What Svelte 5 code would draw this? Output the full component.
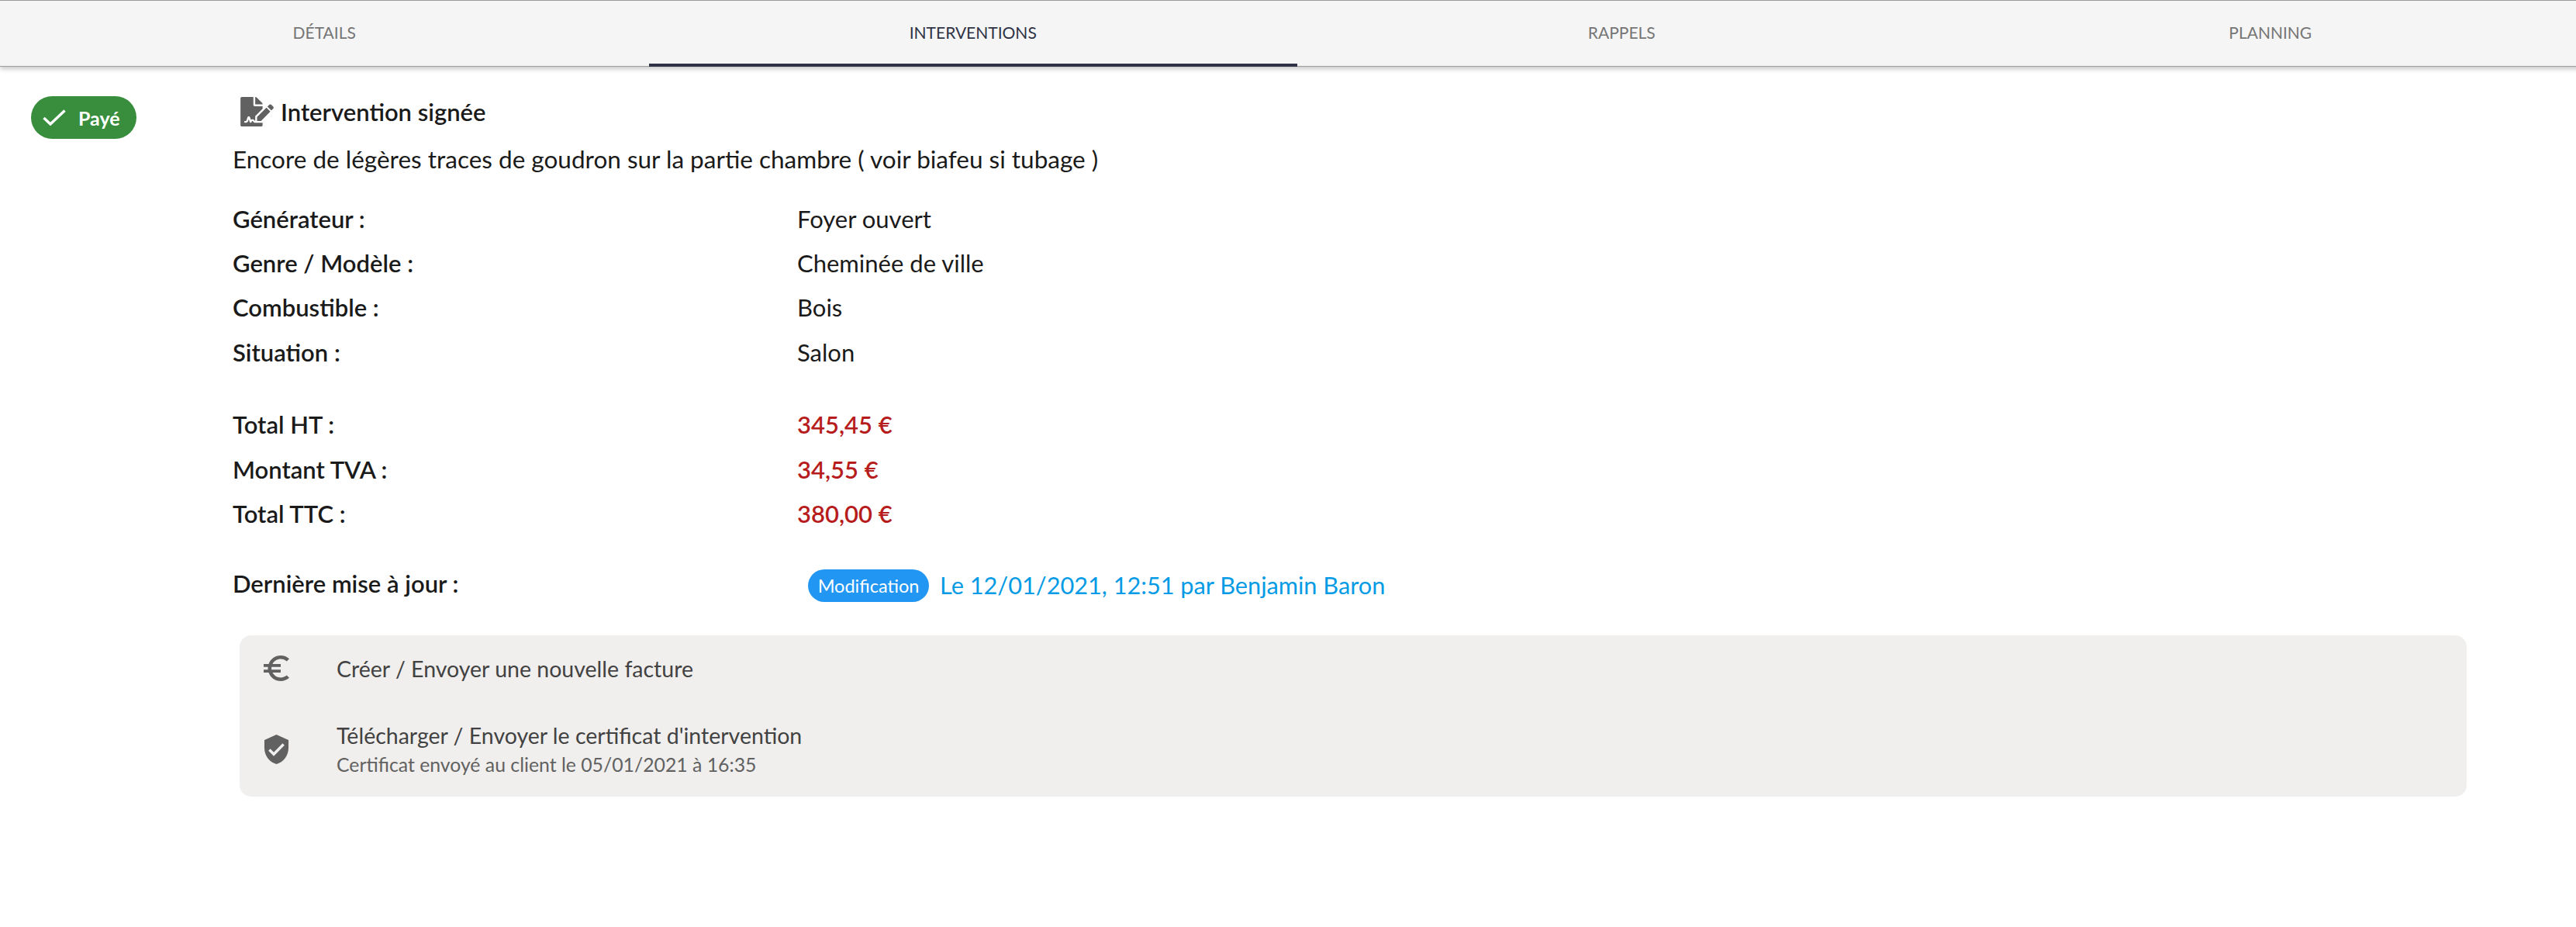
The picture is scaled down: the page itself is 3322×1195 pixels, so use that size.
<script>
  const tabs = ['Détails', 'Interventions', 'Rappels', 'Planning'];
  const active = 'Interventions';

  const infos = [
    ['Générateur :', 'Foyer ouvert'],
    ['Genre / Modèle :', 'Cheminée de ville'],
    ['Combustible :', 'Bois'],
    ['Situation :', 'Salon']
  ];

  const totals = [
    ['Total HT :', '345,45 €'],
    ['Montant TVA :', '34,55 €'],
    ['Total TTC :', '380,00 €']
  ];
</script>

<div class="page">
  <nav class="tabbar">
    {#each tabs as tab}
      <div class="tab" class:tab-active={tab === active}>{tab}</div>
    {/each}
  </nav>

  <div class="body">
    <div class="side">
      <div class="paid">
        <svg class="paid-check" viewBox="0 0 30 21"><polyline points="1.5,11 10,19 28.5,1.5" /></svg>
        <span>Payé</span>
      </div>
    </div>

    <main class="main">
      <h2 class="title">
        <svg class="title-icon" viewBox="0 0 576 512"><path d="M218.17 424.14c-2.95-5.92-8.09-6.52-10.17-6.52s-7.22.59-10.02 6.19l-7.67 15.34c-6.37 12.78-25.03 11.37-29.48-2.09L144 386.59l-10.61 31.88c-5.89 17.66-22.38 29.53-41 29.53H80c-8.84 0-16-7.16-16-16s7.16-16 16-16h12.39c4.83 0 9.11-3.08 10.64-7.66l18.19-54.64c3.3-9.81 12.44-16.41 22.78-16.41s19.48 6.59 22.77 16.41l13.88 41.64c19.75-16.19 54.06-9.7 66 14.16 1.89 3.78 5.49 5.95 9.36 6.26v-82.12l128-127.09V160H248c-13.2 0-24-10.8-24-24V0H24C10.7 0 0 10.7 0 24v464c0 13.3 10.7 24 24 24h336c13.3 0 24-10.7 24-24v-40l-128-.11c-16.12-.31-30.58-9.28-37.83-23.75zM384 121.9c0-6.3-2.5-12.4-7-16.9L279.1 7c-4.5-4.5-10.6-7-17-7H256v128h128v-6.1zm-96 225.06V416h68.99l161.68-162.78-67.88-67.88L288 346.96zm280.54-179.63l-31.87-31.87c-9.94-9.94-26.07-9.94-36.01 0l-27.25 27.25c-2.94 2.94-2.94 7.7 0 10.64l57.23 57.23c2.94 2.94 7.7 2.94 10.64 0l27.25-27.25c9.95-9.94 9.95-26.07.01-36z" /></svg>
        Intervention signée
      </h2>
      <p class="comment">Encore de légères traces de goudron sur la partie chambre ( voir biafeu si tubage )</p>

      <div class="rows rows-infos">
        {#each infos as [label, value]}
          <div class="label">{label}</div>
          <div>{value}</div>
        {/each}
      </div>

      <div class="rows rows-totals">
        {#each totals as [label, value]}
          <div class="label">{label}</div>
          <div class="amount">{value}</div>
        {/each}
      </div>

      <div class="rows rows-update">
        <div class="label update-label">Dernière mise à jour :</div>
        <div class="update">
          <span class="chip">Modification</span>
          <span class="update-text">Le 12/01/2021, 12:51 par Benjamin Baron</span>
        </div>
      </div>

      <div class="actions">
        <div class="action action-first">
          <svg class="action-icon" viewBox="3 3 18 18"><path d="M15 18.5c-2.51 0-4.68-1.42-5.76-3.5H15v-2H8.58c-.05-.33-.08-.66-.08-1s.03-.67.08-1H15V9H9.24C10.32 6.92 12.5 5.5 15 5.5c1.61 0 3.09.59 4.23 1.57L21 5.3C19.41 3.87 17.3 3 15 3c-3.92 0-7.24 2.51-8.48 6H3v2h3.06c-.04.33-.06.66-.06 1 0 .34.02.67.06 1H3v2h3.52c1.24 3.49 4.56 6 8.48 6 2.31 0 4.41-.87 6-2.3l-1.78-1.77c-1.13.98-2.6 1.57-4.22 1.57z" /></svg>
          <div class="action-text">Créer / Envoyer une nouvelle facture</div>
        </div>
        <div class="action action-second">
          <svg class="action-icon action-shield" viewBox="3 1 18 22"><path d="M12 1L3 5v6c0 5.55 3.84 10.74 9 12 5.16-1.26 9-6.45 9-12V5l-9-4zm-2 16l-4-4 1.41-1.41L10 14.17l6.59-6.59L18 9l-8 8z" /></svg>
          <div class="action-text">
            Télécharger / Envoyer le certificat d'intervention
            <div class="action-sub">Certificat envoyé au client le 05/01/2021 à 16:35</div>
          </div>
        </div>
      </div>
    </main>
  </div>
</div>

<style>
  :global(body) {
    margin: 0;
    background: #fff;
    overflow: hidden;
  }

  .page {
    width: 3322px;
    height: 1195px;
    overflow: hidden;
    font-family: Lato, "Noto Sans", sans-serif;
    font-size: 31px;
    color: #1a1a1a;
  }

  .tabbar {
    display: flex;
    width: 3346px;
    height: 86px;
    box-sizing: border-box;
    background: #f5f5f5;
    border-top: 1px solid #9a9a9a;
    border-bottom: 1px solid #9e9e9e;
    box-shadow: 0 3px 6px rgba(0, 0, 0, 0.22);
  }

  .tab {
    flex: 1;
    display: flex;
    align-items: center;
    justify-content: center;
    font-size: 21px;
    text-transform: uppercase;
    color: #757575;
    border-bottom: 4px solid transparent;
    margin-bottom: -1px;
  }

  .tab-active {
    color: #2f3345;
    border-bottom-color: #2f3345;
  }

  .body {
    display: flex;
  }

  .side {
    width: 300px;
    padding: 38px 0 0 40px;
    box-sizing: border-box;
  }

  .paid {
    display: flex;
    align-items: center;
    gap: 16px;
    width: 136px;
    height: 55px;
    box-sizing: border-box;
    padding: 0 0 0 15px;
    border-radius: 28px;
    background: #388e3c;
    color: #fff;
    font-size: 25px;
    font-weight: 700;
  }

  .paid-check {
    width: 30px;
    height: 21px;
    fill: none;
    stroke: #fff;
    stroke-width: 3.4;
  }

  .main {
    flex: 1;
    padding: 0 141px 0 0;
  }

  .title {
    display: flex;
    align-items: center;
    gap: 9px;
    margin: 38px 0 0 10px;
    font-size: 31px;
    font-weight: 600;
    line-height: 40px;
  }

  .title-icon {
    width: 43px;
    height: 38px;
    fill: #616161;
  }

  .comment {
    margin: 21px 0 0;
    font-size: 31.5px;
    line-height: 40px;
  }

  .rows {
    display: grid;
    grid-template-columns: 728px 1fr;
    grid-auto-rows: 57.4px;
    align-items: center;
  }

  .rows-infos {
    margin-top: 28px;
  }

  .rows-totals {
    margin-top: 36px;
  }

  .rows-update {
    margin-top: 34px;
    grid-auto-rows: 60px;
  }

  .label {
    font-weight: 600;
  }

  .amount {
    color: #b71c1c;
    font-weight: 600;
  }

  .update-label {
    margin-top: -6px;
  }

  .update {
    display: flex;
    align-items: center;
    gap: 14px;
    padding-left: 14px;
  }

  .chip {
    display: flex;
    align-items: center;
    justify-content: center;
    width: 156px;
    height: 42px;
    border-radius: 21px;
    background: #2196f3;
    color: #fff;
    font-size: 23.5px;
  }

  .update-text {
    color: #039be5;
    font-size: 30.7px;
  }

  .actions {
    display: flex;
    flex-direction: column;
    margin: 34px 0 0 9px;
    height: 208px;
    box-sizing: border-box;
    border-radius: 15px;
    background: #f0efed;
    color: #424242;
  }

  .action {
    display: flex;
    align-items: center;
    padding-left: 31px;
    gap: 61px;
  }

  .action-first {
    height: 86px;
  }

  .action-second {
    margin-top: 23px;
  }

  .action-icon {
    flex: none;
    width: 33px;
    height: 33px;
    fill: #616161;
  }

  .action-shield {
    height: 38px;
  }

  .action-text {
    font-size: 28.5px;
    line-height: 40px;
  }

  .action-sub {
    font-size: 24.8px;
    line-height: 36px;
    color: #616161;
  }
</style>
